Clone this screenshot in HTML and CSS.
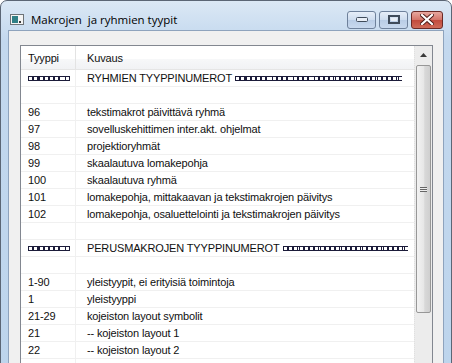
FILE: index.html
```html
<!doctype html>
<html lang="fi">
  <head>
    <meta charset="UTF-8" />
    <title>Makrojen ja ryhmien tyypit</title>
    <link rel="stylesheet" href="styles.css">
  </head>
  <body>
    <div class="window">
      <div class="titlebar">
        <svg class="app-icon" width="14" height="11" viewBox="0 0 14 11">
          <rect x="0.5" y="0.5" width="13" height="10" fill="#f4f4f4" stroke="#6d7378"/>
          <rect x="2" y="2" width="6" height="7" fill="#2f7f86"/>
          <rect x="9" y="7" width="2" height="2" fill="#3a3a3a"/>
        </svg>
        <span class="title">Makrojen&nbsp; ja ryhmien tyypit</span>
        <div class="caption-buttons">
          <div class="cbtn">
            <svg width="12" height="6" viewBox="0 0 12 6"><rect x="0.5" y="0.5" width="11" height="4" rx="1" fill="#e8eef6" stroke="#3f4b5a"/></svg>
          </div>
          <div class="cbtn">
            <svg width="12" height="9" viewBox="0 0 12 9"><rect x="1" y="1" width="10" height="7" fill="none" stroke="#3f4b5a" stroke-width="2"/><rect x="3" y="3" width="6" height="3" fill="#e8eef6"/></svg>
          </div>
          <div class="cbtn close">
            <svg width="14" height="11" viewBox="0 0 14 11">
              <path d="M2 1 L12 10 M12 1 L2 10" stroke="#4a1a16" stroke-width="4" stroke-linecap="square"/>
              <path d="M2 1 L12 10 M12 1 L2 10" stroke="#ffffff" stroke-width="2.2" stroke-linecap="square"/>
            </svg>
          </div>
        </div>
      </div>

      <div class="client">
        <div class="listview">
          <div class="rows">
            <div class="row header">
              <div class="cell c1">Tyyppi</div>
              <div class="cell c2">Kuvaus</div>
            </div>
            <div class="row">
              <div class="cell c1"><span class="boxes" style="width:42px"></span></div>
              <div class="cell c2">RYHMIEN TYYPPINUMEROT <span class="boxes" style="width:167px"></span></div>
            </div>
            <div class="row"><div class="cell c1"></div><div class="cell c2"></div></div>
            <div class="row"><div class="cell c1">96</div><div class="cell c2">tekstimakrot päivittävä ryhmä</div></div>
            <div class="row"><div class="cell c1">97</div><div class="cell c2">sovelluskehittimen inter.akt. ohjelmat</div></div>
            <div class="row"><div class="cell c1">98</div><div class="cell c2">projektioryhmät</div></div>
            <div class="row"><div class="cell c1">99</div><div class="cell c2">skaalautuva lomakepohja</div></div>
            <div class="row"><div class="cell c1">100</div><div class="cell c2">skaalautuva ryhmä</div></div>
            <div class="row"><div class="cell c1">101</div><div class="cell c2">lomakepohja, mittakaavan ja tekstimakrojen päivitys</div></div>
            <div class="row"><div class="cell c1">102</div><div class="cell c2">lomakepohja, osaluettelointi ja tekstimakrojen päivitys</div></div>
            <div class="row"><div class="cell c1"></div><div class="cell c2"></div></div>
            <div class="row">
              <div class="cell c1"><span class="boxes" style="width:42px"></span></div>
              <div class="cell c2">PERUSMAKROJEN TYYPPINUMEROT <span class="boxes" style="width:125px"></span></div>
            </div>
            <div class="row"><div class="cell c1"></div><div class="cell c2"></div></div>
            <div class="row"><div class="cell c1">1-90</div><div class="cell c2">yleistyypit, ei erityisiä toimintoja</div></div>
            <div class="row"><div class="cell c1">1</div><div class="cell c2">yleistyyppi</div></div>
            <div class="row"><div class="cell c1">21-29</div><div class="cell c2">kojeiston layout symbolit</div></div>
            <div class="row"><div class="cell c1">21</div><div class="cell c2">-- kojeiston layout 1</div></div>
            <div class="row"><div class="cell c1">22</div><div class="cell c2">-- kojeiston layout 2</div></div>
            <div class="row"><div class="cell c1"></div><div class="cell c2"></div></div>
          </div>
          <div class="scrollbar">
            <div class="sb-arrow">
              <svg width="7" height="4" viewBox="0 0 7 4"><path d="M0 4 L3.5 0 L7 4 Z" fill="#3a3a3a"/></svg>
            </div>
            <div class="sb-thumb">
              <div class="grip"></div>
            </div>
          </div>
        </div>
      </div>
    </div>
  </body>
</html>
```

FILE: styles.css
```css
body {
  margin: 0;
  background-color: #ffffff;
  overflow: hidden;
  font-family: "Liberation Sans", Arial, sans-serif;
}

.window {
  width: 452px;
  height: 420px;
  box-sizing: border-box;
  border: 1px solid #5b6675;
  border-radius: 7px 7px 0 0;
  background: linear-gradient(#dbe8f5, #c3d8ee 40px, #bcd4ec);
  padding: 0 7px;
  display: flex;
  flex-direction: column;
}

.titlebar {
  flex: none;
  height: 21px;
  padding: 8px 0 0 2px;
  display: flex;
  align-items: center;
}
.title {
  font-family: "Open Sans", "Noto Sans", sans-serif;
  font-size: 11.5px;
  color: #000000;
  margin-left: 7px;
}

.caption-buttons {
  margin-left: auto;
  display: flex;
  gap: 3px;
  margin-right: 1px;
}
.cbtn {
  width: 27px;
  height: 16px;
  border: 1px solid #6e819b;
  border-radius: 3px;
  background: linear-gradient(#e6eef8, #cddcee 50%, #b9cde6 51%, #c8d9ee);
  display: flex;
  align-items: center;
  justify-content: center;
}
.cbtn.close {
  width: 30px;
  border-color: #6b2a26;
  background: linear-gradient(#e7a89f, #d47468 50%, #c24a3c 51%, #cf6a58);
}

.client {
  flex: 1;
  border: 1px solid #8ea3bd;
  border-bottom: none;
  background-color: #f0f0f0;
  padding: 14px 10px 0 11px;
}

.listview {
  border: 1px solid #828790;
  background-color: #ffffff;
  display: flex;
  height: 400px;
}
.rows {
  flex: 1;
}
.row {
  display: flex;
  height: 16px;
  border-bottom: 1px solid #f0f0f0;
  font-size: 11px;
  letter-spacing: -0.15px;
  color: #101010;
}
.row.header {
  height: 23px;
  border-bottom: 1px solid #e5e5e5;
  background: linear-gradient(#ffffff 55%, #f7f8f9 56%, #f1f2f4);
}
.cell {
  display: flex;
  align-items: center;
  white-space: nowrap;
  overflow: hidden;
}
.c1 {
  width: 47px;
  padding-left: 7px;
  border-right: 1px solid #f0f0f0;
}
.header .c1 {
  border-right-color: #e3e3e3;
}
.c2 {
  flex: 1;
  padding-left: 11px;
}
.header .cell {
  padding-top: 1px;
}

.boxes {
  display: inline-block;
  height: 5px;
  box-sizing: border-box;
  border-top: 1px solid #1c1c3a;
  border-bottom: 1px solid #1c1c3a;
  background: repeating-linear-gradient(90deg, #1c1c3a 0 1px, #ffffff 1px 4px, #1c1c3a 4px 5px, #ffffff 5px 5.25px);
  margin-left: 3px;
}
.c1 .boxes {
  margin-left: 0;
}

.scrollbar {
  width: 17px;
  background-color: #ececec;
  border-left: 1px dotted #e0e0e0;
  display: flex;
  flex-direction: column;
  align-items: center;
}
.sb-arrow {
  height: 18px;
  display: flex;
  align-items: center;
  justify-content: center;
}
.sb-thumb {
  width: 13px;
  height: 246px;
  margin-top: 1px;
  border: 1px solid #979797;
  border-radius: 2px;
  background: linear-gradient(90deg, #f2f2f2, #e7e7e7 50%, #d8d8d8 60%, #cfcfcf);
  display: flex;
  align-items: center;
  justify-content: center;
}
.grip {
  width: 7px;
  height: 5px;
  background: repeating-linear-gradient(#666 0 1px, #eeeeee 1px 2px);
}
```
